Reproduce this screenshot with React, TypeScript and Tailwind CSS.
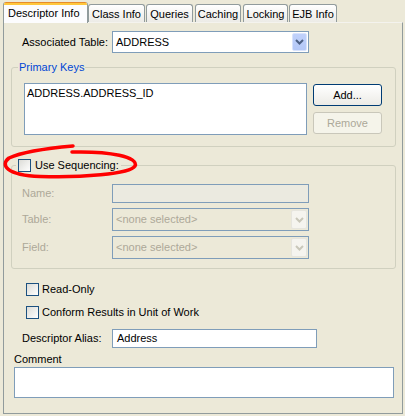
import React from "react";

function Chevron({ color }: { color: string }) {
  return (
    <svg width="9" height="6" viewBox="0 0 9 6">
      <path d="M1 1 L4.5 4.5 L8 1" fill="none" stroke={color} strokeWidth="2" />
    </svg>
  );
}

function Check() {
  return (
    <span className="block w-[13px] h-[13px] border border-[#1C5180] bg-linear-to-br from-[#dcdcd7] to-white shrink-0" />
  );
}

function Combo({
  text,
  disabled,
  w,
  h,
}: {
  text: string;
  disabled?: boolean;
  w: string;
  h: string;
}) {
  return (
    <div
      className={`${w} ${h} flex items-stretch border border-[#7F9DB9] p-[1px] ${
        disabled ? "bg-[#ece9d8]" : "bg-white"
      }`}
    >
      <div
        className={`flex-1 flex items-center pl-[2px] ${
          disabled ? "text-[#ACA899]" : "text-black"
        }`}
      >
        {text}
      </div>
      {disabled ? (
        <div className="w-[16px] flex items-center justify-center bg-[#f5f4ef] border border-[#e6e5de] rounded-[2px]">
          <Chevron color="#C9C7BA" />
        </div>
      ) : (
        <div className="w-[15px] flex items-center justify-center bg-linear-to-b from-[#c0d1fb] to-[#b4c8f7] border border-[#d8e3fd] rounded-[2px]">
          <Chevron color="#4D6185" />
        </div>
      )}
    </div>
  );
}

export default function App() {
  return (
    <div className="w-[405px] h-[416px] bg-[#ece9d8] text-[11px] leading-[13px] text-black font-['Liberation_Sans',Arial,sans-serif] overflow-hidden relative">
      {/* Tabs */}
      <div className="flex items-end h-[22px] pl-[3px] relative z-10">
        <div className="w-[85px] h-[21px] -mb-[1px] flex flex-col border-x border-[#919B9C] rounded-t-[3px] bg-[#fcfcfe] overflow-hidden">
          <div className="h-[1px] bg-[#E68B2C]" />
          <div className="h-[2px] bg-[#FFC73C]" />
          <div className="flex-1 flex items-center pl-[4px] pb-[2px]">Descriptor Info</div>
        </div>
        {[
          ["Class Info", "w-[57px] ml-[0px]"],
          ["Queries", "w-[47px] ml-[1px]"],
          ["Caching", "w-[46px] ml-[2px]"],
          ["Locking", "w-[45px] ml-[2px]"],
          ["EJB Info", "w-[48px] ml-[1px]"],
        ].map(([t, c]) => (
          <div
            key={t}
            className={`${c} h-[18px] flex items-center justify-center border-x border-t border-[#919B9C] rounded-t-[3px] bg-linear-to-b from-white to-[#ecebe6] pt-[1px]`}
          >
            {t}
          </div>
        ))}
      </div>

      {/* Panel */}
      <div className="ml-[3px] w-[400px] h-[392px] border border-[#919B9C] border-t-[#f4f3ee] bg-[#ece9d8] flex flex-col">
        {/* Associated Table */}
        <div className="flex items-center mt-[8px] h-[22px]">
          <span className="ml-[18px] w-[90px]">Associated Table:</span>
          <Combo text="ADDRESS" w="w-[197px]" h="h-[22px]" />
        </div>

        {/* Primary Keys */}
        <div className="mt-[14px] ml-[7px] w-[385px] border border-[#D0D0BF] rounded-[3px] flex flex-col pb-[11px]">
          <div className="-mt-[7px] h-[13px] ml-[6px] px-[1px] w-fit bg-[#ece9d8] text-[#0046D5]">
            Primary Keys
          </div>
          <div className="flex mt-[9px]">
            <div className="ml-[12px] w-[283px] h-[52px] border border-[#7F9DB9] bg-white pl-[2px] pt-[3px]">
              ADDRESS.ADDRESS_ID
            </div>
            <div className="ml-[6px] mt-[1px] flex flex-col gap-[6px]">
              <div className="w-[69px] h-[22px] flex items-center justify-center border border-[#003C74] rounded-[3px] bg-linear-to-b from-white to-[#ecebe6]">
                Add...
              </div>
              <div className="w-[69px] h-[22px] flex items-center justify-center border border-[#C9C7BA] rounded-[3px] bg-[#f5f4ea] text-[#ACA899]">
                Remove
              </div>
            </div>
          </div>
        </div>

        {/* Use Sequencing */}
        <div className="mt-[18px] ml-[7px] w-[385px] border border-[#D0D0BF] rounded-[3px] flex flex-col pb-[9px]">
          <div className="-mt-[7px] h-[13px] ml-[4px] px-[2px] w-fit bg-[#ece9d8] flex items-center gap-[4px]">
            <Check />
            <span>Use Sequencing:</span>
          </div>
          <div className="flex items-center mt-[12px] h-[19px]">
            <span className="ml-[10px] w-[90px] text-[#ACA899]">Name:</span>
            <div className="w-[197px] h-[19px] border border-[#7F9DB9] bg-[#ebeae0]" />
          </div>
          <div className="flex items-center mt-[5px] h-[23px]">
            <span className="ml-[10px] w-[90px] text-[#ACA899]">Table:</span>
            <Combo text="<none selected>" disabled w="w-[197px]" h="h-[23px]" />
          </div>
          <div className="flex items-center mt-[5px] h-[23px]">
            <span className="ml-[10px] w-[90px] text-[#ACA899]">Field:</span>
            <Combo text="<none selected>" disabled w="w-[197px]" h="h-[23px]" />
          </div>
        </div>

        {/* Checkboxes */}
        <div className="flex items-center mt-[14px] ml-[22px] h-[13px] gap-[3px]">
          <Check />
          <span>Read-Only</span>
        </div>
        <div className="flex items-center mt-[10px] ml-[22px] h-[13px] gap-[3px]">
          <Check />
          <span>Conform Results in Unit of Work</span>
        </div>

        {/* Alias */}
        <div className="flex items-center mt-[10px] h-[19px]">
          <span className="ml-[18px] w-[90px]">Descriptor Alias:</span>
          <div className="w-[205px] h-[19px] border border-[#7F9DB9] bg-white flex items-center pl-[4px]">
            Address
          </div>
        </div>

        {/* Comment */}
        <div className="mt-[5px] ml-[10px] h-[13px]">Comment</div>
        <div className="mt-[1px] ml-[10px] w-[380px] h-[31px] border border-[#7F9DB9] bg-white" />
      </div>

      {/* Red hand-drawn ellipse annotation */}
      <svg
        className="absolute left-0 top-0 pointer-events-none"
        width="405"
        height="416"
        viewBox="0 0 405 416"
      >
        <path
          d="M73 146 C 50 148, 22 152, 9 158 C 0 165, 6 175, 40 176.5 C 80 178, 130 174, 135 166 C 139 157, 110 151, 72 152"
          fill="none"
          stroke="#FF0000"
          strokeWidth="3.5"
          strokeLinecap="round"
        />
      </svg>
    </div>
  );
}
